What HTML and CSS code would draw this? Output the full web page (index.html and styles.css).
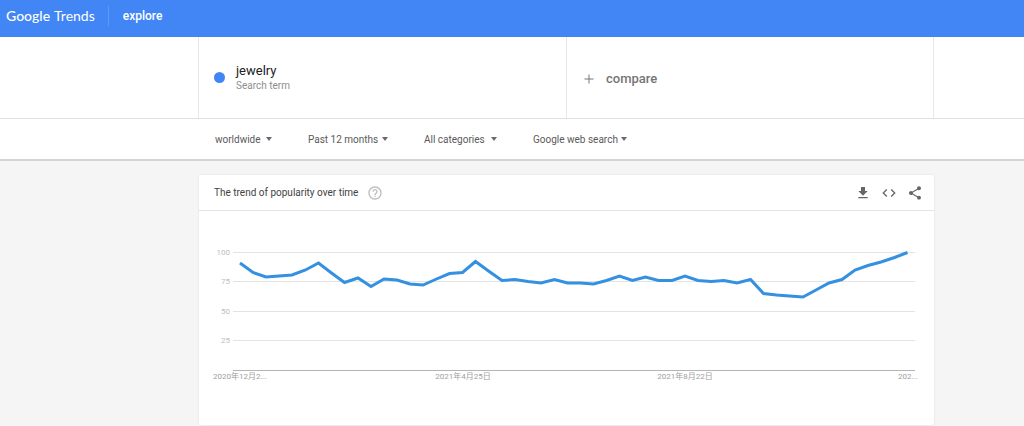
FILE: index.html
```html
<!DOCTYPE html>
<html lang="en">
<head>
<meta charset="utf-8">
<title>Google Trends - explore</title>
<meta name="viewport" content="width=device-width, initial-scale=1">
<link rel="stylesheet" href="styles.css">
</head>
<body>
<header class="topbar">
  <a class="brand" href="#"><span class="brand-name">Google</span><span class="brand-product">Trends</span></a>
  <a class="nav-link" href="#">explore</a>
</header>
<section class="search">
  <div class="terms">
    <div class="term">
      <span class="term-dot"></span>
      <div>
        <div class="term-name">jewelry</div>
        <div class="term-kind">Search term</div>
      </div>
    </div>
    <button class="compare" type="button">
      <svg class="plus" viewBox="0 0 10 10" aria-hidden="true"><path d="M5 .5v9M.5 5h9"/></svg>
      <span>compare</span>
    </button>
  </div>
  <form class="filters">
    <div class="filter filter-region"><select aria-label="Region"><option>worldwide</option></select></div>
    <div class="filter filter-period"><select aria-label="Period"><option>Past 12 months</option></select></div>
    <div class="filter filter-category"><select aria-label="Category"><option>All categories</option></select></div>
    <div class="filter filter-source"><select aria-label="Search type"><option>Google web search</option></select></div>
  </form>
</section>
<main class="content">
  <article class="card">
    <header class="card-head">
      <h1 class="card-title">The trend of popularity over time</h1>
      <button class="icon-button help" type="button" aria-label="Help">
        <svg viewBox="0 0 24 24"><path d="M11 18h2v-2h-2v2zm1-16C6.480 2 2 6.480 2 12s4.480 10 10 10 10-4.480 10-10S17.520 2 12 2zm0 18c-4.410 0-8-3.590-8-8s3.590-8 8-8 8 3.590 8 8-3.590 8-8 8zm0-14c-2.210 0-4 1.790-4 4h2c0-1.100.9-2 2-2s2 .9 2 2c0 2-3 1.750-3 5h2c0-2.250 3-2.500 3-5 0-2.210-1.790-4-4-4z"/></svg>
      </button>
      <div class="actions">
        <button class="icon-button" type="button" aria-label="Download">
          <svg viewBox="0 0 24 24"><path d="M19 9h-4V3H9v6H5l7 7 7-7zM5 18v2h14v-2H5z"/></svg>
        </button>
        <button class="icon-button" type="button" aria-label="Embed">
          <svg viewBox="0 0 24 24"><path d="M9.400 16.600L4.800 12l4.600-4.600L8 6l-6 6 6 6 1.400-1.400zm5.200 0l4.600-4.600-4.600-4.600L16 6l6 6-6 6-1.400-1.400z"/></svg>
        </button>
        <button class="icon-button" type="button" aria-label="Share">
          <svg viewBox="0 0 24 24"><path d="M18 16.080c-.76 0-1.440.3-1.960.77L8.910 12.700c.05-.23.09-.46.09-.7s-.04-.47-.09-.7l7.050-4.110c.54.5 1.250.81 2.040.81 1.660 0 3-1.340 3-3s-1.340-3-3-3-3 1.340-3 3c0 .24.04.47.09.7L8.040 9.810C7.500 9.310 6.790 9 6 9c-1.660 0-3 1.340-3 3s1.340 3 3 3c.79 0 1.500-.31 2.040-.81l7.120 4.160c-.05.21-.08.43-.08.65 0 1.610 1.310 2.920 2.920 2.920s2.920-1.310 2.920-2.920-1.310-2.920-2.920-2.920z"/></svg>
        </button>
      </div>
    </header>
    <svg class="chart" viewBox="0 0 735 214" role="img" aria-label="Interest over time for jewelry">
      <path class="grid" d="M34 41.500H716M34 70.500H716M34 100.500H716M34 129.500H716"/>
      <path class="axis" d="M34 159.500H716"/>
      <g class="y-labels">
        <text x="31" y="44">100</text>
        <text x="31" y="73">75</text>
        <text x="31" y="103">50</text>
        <text x="31" y="132">25</text>
      </g>
      <g class="x-labels">
        <text x="41" y="168">2020年12月2...</text>
        <text x="264" y="168">2021年4月25日</text>
        <text x="486" y="168">2021年8月22日</text>
        <text x="709" y="168">202...</text>
      </g>
      <polyline class="series" points="41,52 54,61.500 67,66 80,65 93,64 106.500,59 119.500,52 132.500,62 145.500,71.500 159,67 172,75.500 185,68 198,69 211,73 224,74 237.500,68 250.500,62.500 263.500,61.500 276.500,50.500 289.500,60 303,69.500 316,68.500 329,70.500 342,72 355.500,68.500 368.500,72 381.500,72 394.500,73 407.500,69.500 420.500,65 433.500,69.500 446.500,66 459.500,69.500 473,69.500 486,65 499,69.500 512,70.500 525,69.500 538,72 551.500,68.500 564.500,82.500 577.500,84 590.500,85 604,86 617,79 630,72 643,68.500 656,59 669,54.500 682,51 695.500,46.500 708.500,41.500"/>
    </svg>
  </article>
</main>
</body>
</html>
```

FILE: styles.css
```css
* {
  box-sizing: border-box;
}

body {
  margin: 0;
  background: #f5f5f5;
  color: #212121;
  font-family: Roboto, "Noto Sans CJK SC", sans-serif;
  font-size: 10px;
}

a {
  color: inherit;
  text-decoration: none;
}

button,
select {
  margin: 0;
  padding: 0;
  border: 0;
  background: none;
  color: inherit;
  font: inherit;
  cursor: pointer;
}

.topbar {
  display: flex;
  align-items: center;
  height: 37px;
  padding: 0 6px 5px;
  background: #4285f4;
  color: #fff;
}

.brand {
  display: flex;
  gap: 4px;
  padding-right: 13px;
  border-right: 1px solid #5f98f5;
  font-family: Lato, sans-serif;
  font-size: 14px;
  line-height: 20px;
}

.brand-name {
  font-weight: 500;
}

.nav-link {
  padding-left: 14px;
  font-size: 12px;
  font-weight: 500;
  line-height: 16px;
}

.search {
  border-bottom: 2px solid #d4d4d4;
  background: #fff;
}

.terms,
.filters {
  padding: 0 90px 0 198px;
}

.terms {
  display: grid;
  grid-template-columns: 1fr 1fr;
  min-height: 82px;
  border-bottom: 1px solid #e0e0e0;
}

.term,
.compare {
  display: flex;
  align-items: center;
  border-left: 1px solid #e8e8e8;
}

.term {
  gap: 11px;
  padding-left: 15px;
}

.term-dot {
  width: 11px;
  height: 11px;
  border-radius: 50%;
  background: #4285f4;
}

.term-name {
  font-size: 13px;
  line-height: 16px;
}

.term-kind {
  color: #8e8e8e;
  line-height: 14px;
}

.compare {
  gap: 12px;
  padding-top: 2px;
  padding-left: 17px;
  border-right: 1px solid #e8e8e8;
  color: #757575;
  font-size: 13px;
  font-weight: 500;
}

.plus {
  width: 10px;
  height: 10px;
  fill: none;
  stroke: #757575;
}

.filters {
  display: flex;
  gap: 36px;
  padding-left: 215px;
}

.filter {
  position: relative;
  color: #5a5a5a;
}

.filter::after {
  position: absolute;
  top: 18px;
  right: 0;
  border: 3px solid transparent;
  border-top: 4px solid #6a6a6a;
  border-bottom: 0;
  content: "";
  pointer-events: none;
}

.filter select {
  width: 100%;
  height: 40px;
  appearance: none;
}

.filter-region {
  width: 57px;
}

.filter-period {
  width: 80px;
}

.filter-category {
  width: 73px;
}

.filter-source {
  width: 94px;
}

.content {
  padding: 14px 90px 1px 199px;
}

.card {
  border-radius: 2px;
  background: #fff;
  box-shadow: 0 0 2px #d8d8d8;
}

.card-head {
  display: flex;
  align-items: center;
  height: 36px;
  padding: 0 11px 0 15px;
  border-bottom: 1px solid #e4e4e4;
}

.card-title {
  margin: 0;
  color: #424242;
  font-size: 10px;
  font-weight: 400;
}

.icon-button {
  display: flex;
  color: #666;
}

.icon-button svg {
  width: 16px;
  height: 16px;
  fill: currentColor;
}

.help {
  margin-left: 9px;
  color: #bdbdbd;
}

.actions {
  display: flex;
  gap: 10px;
  margin-left: auto;
}

.chart {
  display: block;
  width: 100%;
}

.grid,
.axis,
.series {
  fill: none;
}

.grid {
  stroke: #e3e3e3;
}

.axis {
  stroke: #b5b5b5;
}

.series {
  stroke: #3490e0;
  stroke-width: 3px;
}

.y-labels,
.x-labels {
  font-size: 8px;
}

.y-labels {
  fill: #bdbdbd;
  text-anchor: end;
}

.x-labels {
  fill: #9e9e9e;
  text-anchor: middle;
}
```
